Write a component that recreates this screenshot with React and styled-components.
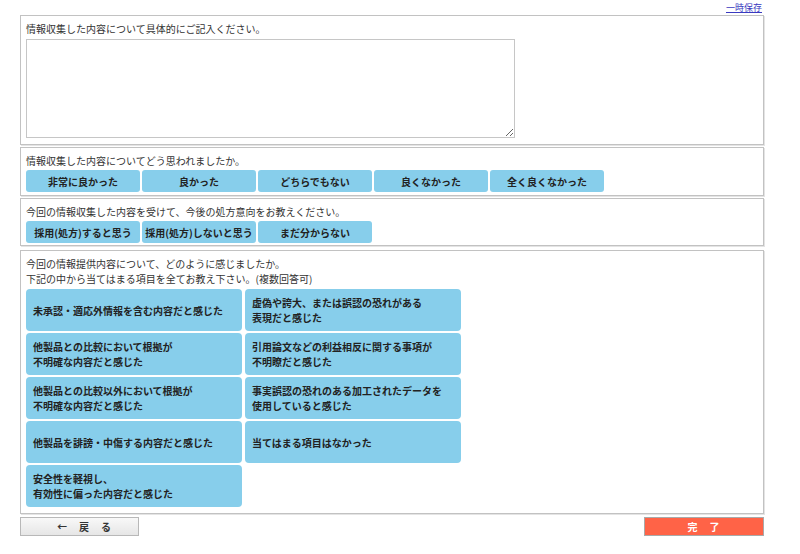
import React from "react";
import styled, { createGlobalStyle } from "styled-components";

const Global = createGlobalStyle`
  html, body { margin: 0; padding: 0; background: #fff; }
  body {
    font-family: "Noto Sans CJK JP", "Noto Sans", sans-serif;
    color: #333;
  }
`;

const Page = styled.div`
  width: 744px;
  margin-left: 20px;
  padding-bottom: 20px;
`;

const TopBar = styled.div`
  height: 15px;
  display: flex;
  justify-content: flex-end;
  align-items: center;
  padding-right: 2px;
`;

const SaveLink = styled.a`
  font-size: 9px;
  line-height: 12px;
  color: #3a3ac0;
  text-decoration: underline;
  cursor: pointer;
`;

const Panel = styled.section`
  border: 1px solid #c2c2c2;
  box-shadow: 1px 1px 0 #e4e4e4;
  padding: 5px 5px ${(p) => p.$pb || 5}px;
  margin-bottom: ${(p) => p.$mb || 3}px;
`;

const Label = styled.p`
  margin: 0 0 ${(p) => p.$mb || 2}px;
  font-size: 10px;
  line-height: 15px;
  color: #333;
`;

const TextArea = styled.textarea`
  display: block;
  box-sizing: border-box;
  width: 489px;
  height: 99px;
  border: 1px solid #c6c6c6;
  margin: 0;
  padding: 2px;
  font-family: inherit;
  font-size: 10px;
  resize: both;
  outline: none;
`;

const ButtonRow = styled.div`
  display: flex;
  gap: 2px;
`;

const Choice = styled.button`
  width: 114px;
  height: 22px;
  border: none;
  border-radius: 3px;
  background: #87ceeb;
  color: #222;
  font-family: inherit;
  font-size: 10px;
  font-weight: bold;
  padding: 0;
  cursor: pointer;
`;

const Grid = styled.div`
  display: grid;
  grid-template-columns: 216px 216px;
  grid-auto-rows: 42px;
  column-gap: 3px;
  row-gap: 2px;
`;

const Item = styled.button`
  display: flex;
  align-items: center;
  text-align: left;
  border: none;
  border-radius: 4px;
  background: #87ceeb;
  color: #222;
  font-family: inherit;
  font-size: 10px;
  line-height: 15px;
  font-weight: bold;
  padding: 0 0 0 7px;
  cursor: pointer;
`;

const Footer = styled.div`
  display: flex;
  justify-content: space-between;
  margin-top: 2px;
`;

const BackButton = styled.button`
  width: 119px;
  height: 19px;
  border: 1px solid #b8b8b8;
  background: linear-gradient(#f8f8f8, #e6e6e6);
  color: #333;
  font-family: inherit;
  font-size: 10px;
  font-weight: bold;
  padding: 0 0 0 6px;
  letter-spacing: 1px;
  text-align: left;
  text-indent: 30px;
  cursor: pointer;
`;

const DoneButton = styled.button`
  width: 120px;
  height: 19px;
  border: 1px solid #a9a9a9;
  background: #ff6347;
  color: #fff;
  font-family: inherit;
  font-size: 10px;
  font-weight: bold;
  padding: 0;
  letter-spacing: 1px;
  cursor: pointer;
`;

const ratings = ["非常に良かった", "良かった", "どちらでもない", "良くなかった", "全く良くなかった"];
const intents = ["採用(処方)すると思う", "採用(処方)しないと思う", "まだ分からない"];
const items = [
  ["未承認・適応外情報を含む内容だと感じた"],
  ["虚偽や誇大、または誤認の恐れがある", "表現だと感じた"],
  ["他製品との比較において根拠が", "不明確な内容だと感じた"],
  ["引用論文などの利益相反に関する事項が", "不明瞭だと感じた"],
  ["他製品との比較以外において根拠が", "不明確な内容だと感じた"],
  ["事実誤認の恐れのある加工されたデータを", "使用していると感じた"],
  ["他製品を誹謗・中傷する内容だと感じた"],
  ["当てはまる項目はなかった"],
  ["安全性を軽視し、", "有効性に偏った内容だと感じた"],
];

export default function App() {
  return (
    <Page>
      <Global />
      <TopBar>
        <SaveLink>一時保存</SaveLink>
      </TopBar>
      <Panel $pb={6} $mb={2}>
        <Label $mb={3}>情報収集した内容について具体的にご記入ください。</Label>
        <TextArea />
      </Panel>
      <Panel $pb={3} $mb={2}>
        <Label>情報収集した内容についてどう思われましたか。</Label>
        <ButtonRow>
          {ratings.map((r) => (
            <Choice key={r}>{r}</Choice>
          ))}
        </ButtonRow>
      </Panel>
      <Panel $pb={2} $mb={4}>
        <Label>今回の情報収集した内容を受けて、今後の処方意向をお教えください。</Label>
        <ButtonRow>
          {intents.map((r) => (
            <Choice key={r}>{r}</Choice>
          ))}
        </ButtonRow>
      </Panel>
      <Panel $pb={6}>
        <Label $mb={3}>
          今回の情報提供内容について、どのように感じましたか。
          <br />
          下記の中から当てはまる項目を全てお教え下さい。(複数回答可)
        </Label>
        <Grid>
          {items.map((lines, i) => (
            <Item key={i}>
              <span>
                {lines.map((l, j) => (
                  <React.Fragment key={j}>
                    {j > 0 && <br />}
                    {l}
                  </React.Fragment>
                ))}
              </span>
            </Item>
          ))}
        </Grid>
      </Panel>
      <Footer>
        <BackButton>←　戻　る</BackButton>
        <DoneButton>完　了</DoneButton>
      </Footer>
    </Page>
  );
}
